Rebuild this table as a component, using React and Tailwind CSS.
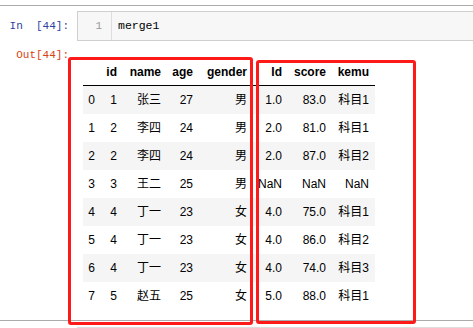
import React from "react";

const rows = [
  ["0", "1", "张三", "27", "男", "1.0", "83.0", "科目1"],
  ["1", "2", "李四", "24", "男", "2.0", "81.0", "科目1"],
  ["2", "2", "李四", "24", "男", "2.0", "87.0", "科目2"],
  ["3", "3", "王二", "25", "男", "NaN", "NaN", "NaN"],
  ["4", "4", "丁一", "23", "女", "4.0", "75.0", "科目1"],
  ["5", "4", "丁一", "23", "女", "4.0", "86.0", "科目2"],
  ["6", "4", "丁一", "23", "女", "4.0", "74.0", "科目3"],
  ["7", "5", "赵五", "25", "女", "5.0", "88.0", "科目1"],
];

const headers = ["", "id", "name", "age", "gender", "Id", "score", "kemu"];

const gridCols = "grid grid-cols-[18px_22px_44px_32px_54px_35px_44px_43px]";

export default function App() {
  return (
    <div className="relative w-[473px] h-[328px] overflow-hidden bg-white">
      <div className="pt-[5px]">
        <div className="h-px bg-[#ababab]" />
        {/* Input cell */}
        <div className="mt-[5px] flex h-[30px]">
          <div
            className="w-[77px] shrink-0 pr-[8px] text-right text-[11px] leading-[30px] text-[#303F9F] whitespace-pre"
            style={{ fontFamily: '"Liberation Mono", monospace' }}
          >
            {"In  [44]:"}
          </div>
          <div className="flex flex-1 border-y border-l border-[#cfcfcf] bg-[#f7f7f7]">
            <div
              className="w-[34px] shrink-0 border-r border-[#dddddd] pr-[9px] text-right text-[11px] leading-[28px] text-[#999]"
              style={{ fontFamily: '"Liberation Mono", monospace' }}
            >
              1
            </div>
            <div
              className="pl-[6px] text-[11.5px] leading-[28px] text-black"
              style={{ fontFamily: '"Liberation Mono", monospace' }}
            >
              merge1
            </div>
          </div>
        </div>
        {/* Output cell */}
        <div className="mt-[7px] flex">
          <div
            className="w-[77px] shrink-0 pr-[8px] text-right text-[11px] leading-[14px] text-[#D84315]"
            style={{ fontFamily: '"Liberation Mono", monospace' }}
          >
            Out[44]:
          </div>
          <div
            className="pl-[6px] pt-[10px] text-[12px] text-black"
            style={{ fontFamily: '"Liberation Sans", Arial, "Noto Sans CJK SC", sans-serif' }}
          >
            <div className={`${gridCols} h-[28px] items-center border-b border-black font-bold`}>
              {headers.map((h, i) => (
                <div key={i} className="pr-[6px] text-right leading-[14px]">
                  {h}
                </div>
              ))}
            </div>
            {rows.map((r, ri) => (
              <div
                key={ri}
                className={`${gridCols} h-[28px] items-center ${ri % 2 === 0 ? "bg-[#f5f5f5]" : "bg-white"}`}
              >
                {r.map((c, ci) => (
                  <div key={ci} className="pr-[6px] text-right leading-[14px] whitespace-nowrap">
                    {c}
                  </div>
                ))}
              </div>
            ))}
          </div>
        </div>
        <div className="mt-[10px] h-px bg-[#ababab]" />
        <div className="mt-[6px] ml-[77px] h-px bg-[#dddddd]" />
      </div>

      {/* Red annotation boxes */}
      <div className="absolute left-[68px] top-[57px] w-[185px] h-[268px] rounded-[3px] border-[3px] border-[#ff1a1a]" />
      <div className="absolute left-[256px] top-[60px] w-[160px] h-[264px] rounded-[3px] border-[3px] border-[#ff1a1a]" />
    </div>
  );
}
